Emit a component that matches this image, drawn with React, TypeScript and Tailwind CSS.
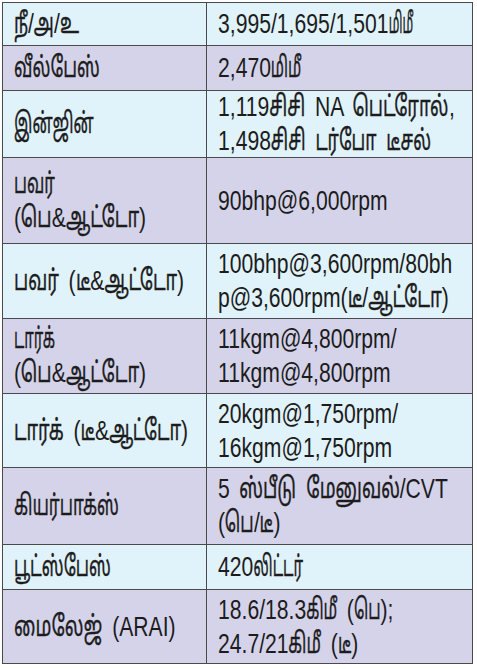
import { useLayoutEffect, useRef, useState } from "react";

type Ln = { t: string; w?: number };
type Row = { left: Ln[]; right: Ln[]; h: string; bg: string };

const BLUE = "bg-[#e0f2fa]";
const LAVENDER = "bg-[#d5d3ea]";
const LATIN = 0.755;

// w = printed width of the line in the reference, px
const rows: Row[] = [
  { left: [{ t: "நீ/அ/உ", w: 65 }], right: [{ t: "3,995/1,695/1,501மிமீ", w: 195 }], h: "h-[43px] border-b", bg: BLUE },
  { left: [{ t: "வீல்பேஸ்", w: 86 }], right: [{ t: "2,470மிமீ", w: 83 }], h: "h-[45px] border-b", bg: LAVENDER },
  {
    left: [{ t: "இன்ஜின்", w: 80 }],
    right: [{ t: "1,119சிசி NA பெட்ரோல்,", w: 237 }, { t: "1,498சிசி டர்போ டீசல்", w: 213 }],
    h: "h-[67px] border-b",
    bg: BLUE,
  },
  { left: [{ t: "பவர்", w: 41 }, { t: "(பெ&ஆட்டோ)", w: 132 }], right: [{ t: "90bhp@6,000rpm" }], h: "h-[86px] border-b", bg: LAVENDER },
  {
    left: [{ t: "பவர் (டீ&ஆட்டோ)", w: 170 }],
    right: [{ t: "100bhp@3,600rpm/80bh" }, { t: "p@3,600rpm(டீ/ஆட்டோ)", w: 231 }],
    h: "h-[75px] border-b",
    bg: BLUE,
  },
  {
    left: [{ t: "டார்க்", w: 41 }, { t: "(பெ&ஆட்டோ)", w: 132 }],
    right: [{ t: "11kgm@4,800rpm/" }, { t: "11kgm@4,800rpm" }],
    h: "h-[75px] border-b",
    bg: LAVENDER,
  },
  {
    left: [{ t: "டார்க் (டீ&ஆட்டோ)", w: 174 }],
    right: [{ t: "20kgm@1,750rpm/" }, { t: "16kgm@1,750rpm" }],
    h: "h-[74px] border-b",
    bg: BLUE,
  },
  {
    left: [{ t: "கியர்பாக்ஸ்", w: 105 }],
    right: [{ t: "5 ஸ்பீடு மேனுவல்/CVT", w: 230 }, { t: "(பெ/டீ)", w: 62 }],
    h: "h-[77px] border-b",
    bg: LAVENDER,
  },
  { left: [{ t: "பூட்ஸ்பேஸ்", w: 97 }], right: [{ t: "420லிட்டர்", w: 85 }], h: "h-[45px] border-b", bg: BLUE },
  {
    left: [{ t: "மைலேஜ் (ARAI)", w: 162 }],
    right: [{ t: "18.6/18.3கிமீ (பெ);", w: 175 }, { t: "24.7/21கிமீ (டீ)", w: 139 }],
    h: "h-[73px]",
    bg: LAVENDER,
  },
];

const TAMIL = /([\u0B80-\u0BFF]+)/;
const isTamil = (s: string) => /[\u0B80-\u0BFF]/.test(s);

// Latin is squeezed by the line; Tamil runs get whatever squeeze makes the line hit its printed width
function Line({ t, w }: Ln) {
  const parts = t.split(TAMIL).filter(Boolean);
  const refs = useRef<(HTMLSpanElement | null)[]>([]);
  const [k, setK] = useState(0.66);
  const [widths, setWidths] = useState<number[]>([]);

  useLayoutEffect(() => {
    const ws = parts.map((_, i) => refs.current[i]?.offsetWidth ?? 0);
    let latin = 0;
    let tamil = 0;
    parts.forEach((p, i) => (isTamil(p) ? (tamil += ws[i]) : (latin += ws[i])));
    setWidths(ws);
    if (w && tamil > 0) setK(Math.max(0.3, (w / LATIN - latin) / tamil));
  }, [t, w]);

  return (
    <span className="block whitespace-nowrap origin-left scale-x-[0.755] [word-spacing:5px]">
      {parts.map((p, i) =>
        isTamil(p) ? (
          <span
            key={i}
            ref={(el) => {
              refs.current[i] = el;
            }}
            className="inline-block origin-left [-webkit-text-stroke:0.4px_#1c1c1c]"
            style={{ transform: `scaleX(${k})`, marginRight: -(1 - k) * (widths[i] ?? 0) }}
          >
            {p}
          </span>
        ) : (
          <span
            key={i}
            ref={(el) => {
              refs.current[i] = el;
            }}
          >
            {p}
          </span>
        )
      )}
    </span>
  );
}

function Cell({ lines, className }: { lines: Ln[]; className: string }) {
  return (
    <div className={`flex flex-col justify-center overflow-hidden px-[11px] ${className}`}>
      {lines.map((l) => (
        <Line key={l.t} t={l.t} w={l.w} />
      ))}
    </div>
  );
}

export default function App() {
  return (
    <div className="min-h-[669px] bg-white pt-[2px] pl-[2px]">
      <div className="w-[471px] border border-[#4a4a4a] font-['Liberation_Sans','Noto_Sans_Tamil',sans-serif] text-[28px] leading-[34px] text-[#1c1c1c]">
        {rows.map((r, i) => (
          <div key={i} className={`grid grid-cols-[204px_1fr] border-[#4a4a4a] ${r.h} ${r.bg}`}>
            <Cell lines={r.left} className="border-r border-[#4a4a4a]" />
            <Cell lines={r.right} className="" />
          </div>
        ))}
      </div>
    </div>
  );
}
